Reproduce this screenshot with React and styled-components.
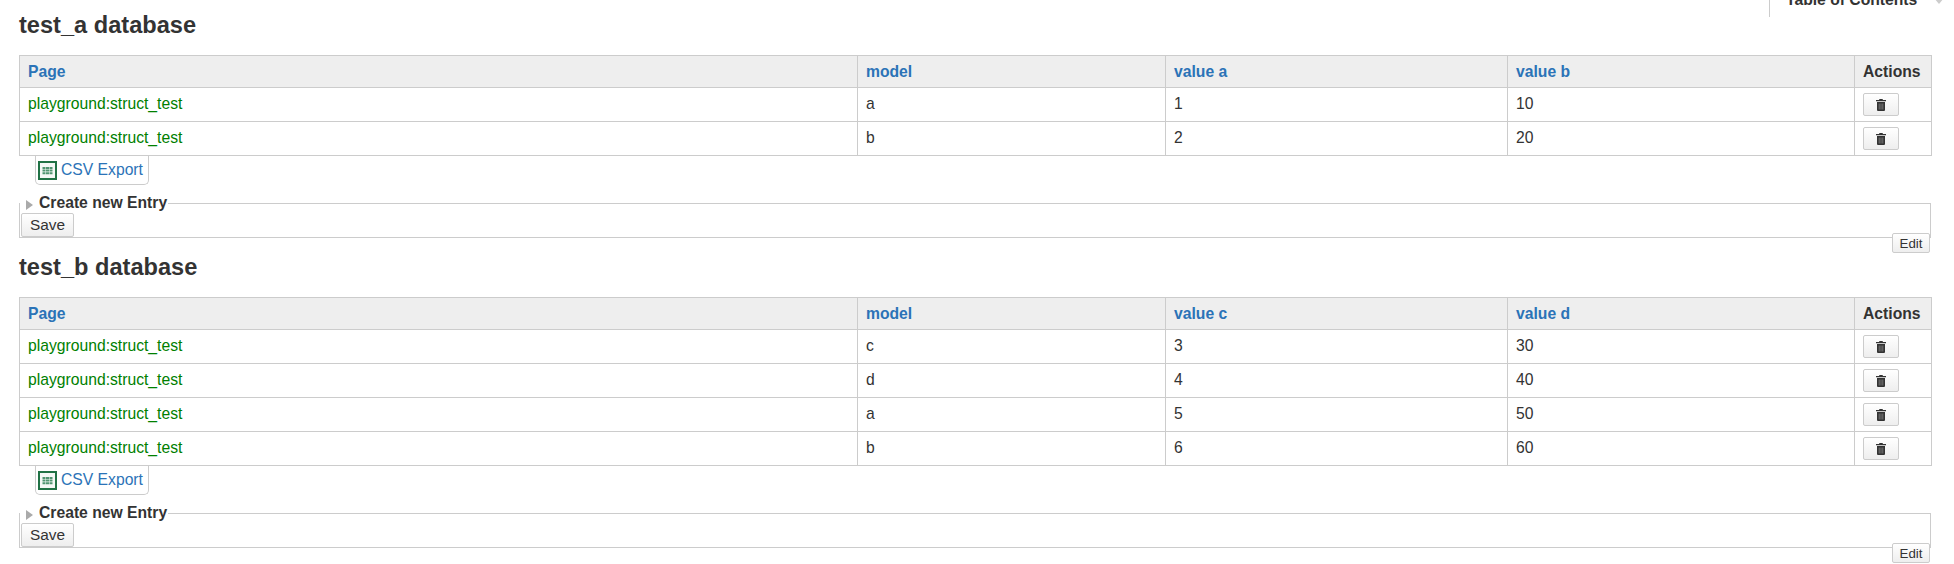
import styled, { createGlobalStyle } from "styled-components";
import React from "react";

const GlobalStyle = createGlobalStyle`
  html, body {
    margin: 0;
    padding: 0;
    background: #fff;
  }
  body {
    font-family: "Liberation Sans", Arial, sans-serif;
    font-size: 15.7px;
    color: #333;
    overflow: hidden;
  }
`;

const Page = styled.div`
  position: relative;
  width: 1954px;
  height: 564px;
  padding: 11px 23px 0 19px;
  box-sizing: border-box;
  overflow: hidden;
`;

const Toc = styled.div`
  position: absolute;
  top: -9px;
  left: 1769px;
  height: 26px;
  padding-left: 16px;
  border-left: 1px solid #ccc;
  font-weight: bold;
  line-height: 18px;
  display: flex;
  gap: 17px;
  color: #333;
`;

const TocArrow = styled.span`
  margin-top: 7px;
  width: 0;
  height: 0;
  border-left: 5px solid transparent;
  border-right: 5px solid transparent;
  border-top: 6px solid #ccc;
`;

const Title = styled.h2`
  margin: 0 0 15px;
  font-size: 23.6px;
  line-height: 29px;
  font-weight: bold;
  color: #333;
`;

const Table = styled.table`
  width: 1912px;
  border-collapse: collapse;
  table-layout: fixed;
`;

const Th = styled.th`
  height: 31px;
  padding: 0 8px;
  border: 1px solid #ccc;
  background: #eee;
  text-align: left;
  font-weight: bold;
  color: ${(p) => (p.$plain ? "#333" : "#2b73b7")};
`;

const Td = styled.td`
  height: 31px;
  padding: 0 8px 2px;
  border: 1px solid #ccc;
  color: ${(p) => (p.$page ? "#008000" : "#333")};
`;

const ActionTd = styled(Td)`
  padding: 1px 0 1px 8px;
`;

const DeleteButton = styled.button`
  display: flex;
  align-items: center;
  justify-content: center;
  width: 36px;
  height: 23px;
  padding: 0;
  border: 1px solid #ccc;
  border-radius: 2px;
  background: linear-gradient(#fff, #eee);
`;

const Export = styled.a`
  display: flex;
  width: fit-content;
  align-items: center;
  gap: 4px;
  height: 28px;
  margin-left: 16px;
  padding: 0 5px 0 2px;
  border: 1px solid #ccc;
  border-top: none;
  border-radius: 0 0 5px 5px;
  color: #2b73b7;
`;

const ExcelIcon = styled.svg`
  width: 19px;
  height: 19px;
`;

const EntryBox = styled.fieldset`
  margin: 9px 0 0;
  padding: 0;
  min-width: 0;
  height: 44px;
  box-sizing: border-box;
  border: 1px solid #ccc;
`;

const Legend = styled.legend`
  margin: 0;
  padding: 0 1px 0 6px;
  font-weight: bold;
  line-height: 18px;
  color: #333;
  display: flex;
  align-items: center;
  gap: 6px;
`;

const LegendArrow = styled.span`
  margin-top: 3px;
  width: 0;
  height: 0;
  border-top: 5px solid transparent;
  border-bottom: 5px solid transparent;
  border-left: 7px solid #aaa;
`;

const SaveButton = styled.button`
  display: block;
  width: 53px;
  height: 24px;
  margin: 1px 0 0 1px;
  padding: 0;
  font: 15.4px "Liberation Sans", Arial, sans-serif;
  color: #333;
  border: 1px solid #ccc;
  border-radius: 2px;
  background: linear-gradient(#fff, #eee);
`;

const EditRow = styled.div`
  position: relative;
  display: flex;
  justify-content: flex-end;
  height: 20px;
  padding-right: 1px;
  margin-top: -5px;
`;

const EditButton = styled.button`
  width: 38px;
  height: 20px;
  padding: 0;
  font: 13.3px "Liberation Sans", Arial, sans-serif;
  color: #333;
  border: 1px solid #ccc;
  border-radius: 2px;
  background: linear-gradient(#fff, #eee);
`;

const Trash = () => (
  <svg width="10" height="12" viewBox="0 0 10 12">
    <path fill="#333" d="M3.5 0h3l.5 1h3v1.300H0V1h3zM1 3h8v8a1 1 0 0 1-1 1H2a1 1 0 0 1-1-1z" />
    <path stroke="#888" strokeWidth="0.8" d="M3.200 4.500v6M5 4.500v6M6.800 4.500v6" />
  </svg>
);

const Excel = () => (
  <ExcelIcon viewBox="0 0 19 19">
    <rect x="1" y="1" width="17" height="17" fill="#f3f8f5" stroke="#207245" strokeWidth="2" />
    <path fill="#4f9470" d="M4.500 6h3v2h-3zM8 6h3v2H8zM11.500 6h3v2h-3zM4.500 8.600h3v2h-3zM8 8.600h3v2H8zM11.500 8.600h3v2h-3zM4.500 11.200h3v2h-3zM8 11.200h3v2H8zM11.500 11.200h3v2h-3z" />
  </ExcelIcon>
);

const databases = [
  {
    name: "test_a database",
    cols: ["value a", "value b"],
    rows: [["a", 1, 10], ["b", 2, 20]],
  },
  {
    name: "test_b database",
    cols: ["value c", "value d"],
    rows: [["c", 3, 30], ["d", 4, 40], ["a", 5, 50], ["b", 6, 60]],
  },
];

const Database = ({ db }) => (
  <section>
    <Title>{db.name}</Title>
    <Table>
      <colgroup>
        <col width="838" />
        <col width="308" />
        <col width="342" />
        <col width="347" />
        <col width="77" />
      </colgroup>
      <thead>
        <tr>
          <Th>Page</Th>
          <Th>model</Th>
          <Th>{db.cols[0]}</Th>
          <Th>{db.cols[1]}</Th>
          <Th $plain>Actions</Th>
        </tr>
      </thead>
      <tbody>
        {db.rows.map((row) => (
          <tr key={row[0]}>
            <Td $page>playground:struct_test</Td>
            <Td>{row[0]}</Td>
            <Td>{row[1]}</Td>
            <Td>{row[2]}</Td>
            <ActionTd>
              <DeleteButton><Trash /></DeleteButton>
            </ActionTd>
          </tr>
        ))}
      </tbody>
    </Table>
    <Export><Excel />CSV Export</Export>
    <EntryBox>
      <Legend><LegendArrow />Create new Entry</Legend>
      <SaveButton>Save</SaveButton>
    </EntryBox>
    <EditRow>
      <EditButton>Edit</EditButton>
    </EditRow>
  </section>
);

export default function App() {
  return (
    <Page>
      <GlobalStyle />
      <Toc>Table of Contents<TocArrow /></Toc>
      {databases.map((db) => (
        <Database key={db.name} db={db} />
      ))}
    </Page>
  );
}
